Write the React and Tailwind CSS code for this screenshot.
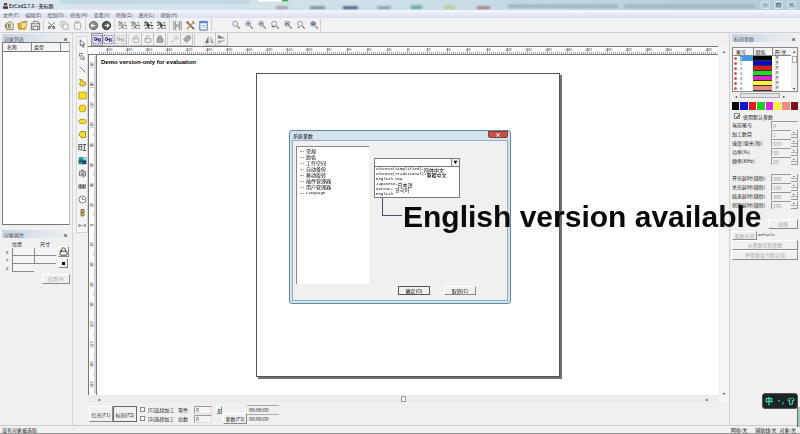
import { useState } from 'react'
import { Scissors, Copy, Clipboard, Lock, LockOpen, Wrench, Tag } from 'lucide-react'

const menus = ['文件(F)', '编辑(E)', '绘制(D)', '修改(M)', '查看(V)', '特殊(S)', '激光(L)', '帮助(H)']

const pens = [
  { id: 0, color: '#000000' },
  { id: 1, color: '#0a0ac8' },
  { id: 2, color: '#d8201c' },
  { id: 3, color: '#22dd22' },
  { id: 4, color: '#d428d4' },
  { id: 5, color: '#fff23a' },
  { id: 6, color: '#ee8c84' },
]

const swatches = ['#000000', '#1212d4', '#e41a1a', '#22cc22', '#dd22dd', '#ffee33', '#f08a80', '#7a1018']

const penParams = [
  { label: '当前笔号', value: '0', plain: true },
  { label: '加工数目', value: '1' },
  { label: '速度(毫米/秒)', value: '500' },
  { label: '功率(%)', value: '50' },
  { label: '频率(KHz)', value: '20' },
]

const delayParams = [
  { label: '开光延时(微秒)', value: '300' },
  { label: '关光延时(微秒)', value: '100' },
  { label: '结束延时(微秒)', value: '300' },
  { label: '拐角延时(微秒)', value: '100' },
]

const treeItems = ['常规', '颜色', '工作空间', '自动备份', '移动旋转', '插件管理器', '用户管理器']

const languages = [
  ['Chinese(Simplified)-', '简体中文'],
  ['Chinese(Traditional)-', '繁體中文'],
  ['English USA', ''],
  ['Japanese-', '日本語'],
  ['Korean- ', '한국어'],
  ['English', ''],
]

const raised = 'border border-t-white border-l-white border-r-[#8a8a8a] border-b-[#8a8a8a] bg-[#f0f0f0]'
const mono = 'font-[Liberation_Mono] text-[4px]'

function Svg({ children, className = 'size-[11px]' }) {
  return (
    <svg viewBox="0 0 12 12" fill="none" stroke="#555" className={`${className} shrink-0`}>
      {children}
    </svg>
  )
}

const NewIcon = () => (
  <Svg>
    <path d="M3 3.500 7 1.500 10 4v6.500H3z" fill="#fafae8" stroke="#77775a" />
    <path d="M2.500 4a3.500 3.500 0 0 0 0 5M5 4.500v4h3M5 6.500h3M5 4.500h3" stroke="#6b6b20" />
  </Svg>
)
const OpenIcon = () => (
  <Svg>
    <path d="M1 4h4l1 1h3v5H2z" fill="#f4a428" stroke="#c8801c" />
    <path d="M4 2.500 11 1l-1 7-5 2z" fill="#ffe08a" stroke="#c8a040" />
    <path d="m6 3 4-1" stroke="#5577bb" />
  </Svg>
)
const SaveIcon = () => (
  <Svg>
    <path d="M1.500 3.500h9v7h-9z" fill="#d8d8d8" stroke="#666" />
    <path d="M4 3.500v-2h4.500v2M3.500 7h5v3.500h-5z" fill="#fff" stroke="#777" />
  </Svg>
)
const RoundIcon = ({ dark, flip }) => (
  <Svg>
    <circle cx="6" cy="6" r="4.500" fill={dark ? '#555' : '#888'} stroke={dark ? '#333' : '#666'} />
    <path d={flip ? 'M4 6h4M6.500 4 8.500 6l-2 2' : 'M8 6H4M5.500 4 3.500 6l2 2'} stroke="#fff" strokeWidth="1.300" />
  </Svg>
)
const NodesIcon = ({ color = '#555', solid }) => (
  <Svg>
    <path d="M1 3h2M4 3h2M8 3h2M1 6h1M9 6h2M2 9h2M6 9h2M9 9h2M3 1v2M3 4v2M9 5v2M6 7v2" stroke={color} />
    <path d="m4 3 4 3-2 .5L5 8z" fill={solid ? color : '#ddd'} stroke={color} strokeWidth=".800" />
  </Svg>
)
const SelectNodesIcon = ({ color }) => (
  <Svg>
    <path d="M1 1.500h10v9H1z" stroke={color} strokeWidth=".700" strokeDasharray="1.500 1" />
    <path d="M3 4h2v3H3zM7 5h2v3H7zM5 6h2" stroke={color} />
  </Svg>
)
const HatchIcon = () => (
  <Svg>
    <path d="M2 1v10M4 1v10M8 1v10M10 1v10M4 4l4 4M4 8l4-4" stroke="#777" strokeWidth=".900" />
  </Svg>
)
const ToolIcon = () => (
  <Svg>
    <path d="m2 2 8 8" stroke="#555" strokeWidth="1.600" />
    <path d="m10 2-8 8" stroke="#d2962c" strokeWidth="1.600" />
    <path d="M8 1.500 10.500 4M1.500 3.500l2-2" stroke="#555" />
  </Svg>
)
const PropsIcon = () => (
  <Svg>
    <path d="M2 1.500h8v9.500H2z" fill="#f5faff" stroke="#3767a8" />
    <path d="M2 2.500h8" stroke="#4d8ce0" strokeWidth="2" />
    <path d="M4 6h4M4 8h4" stroke="#99b" strokeWidth=".800" />
  </Svg>
)
const ZoomIcon = ({ mark }) => (
  <Svg className="size-[10px]">
    <circle cx="5" cy="4.500" r="3" fill="#eef2fa" stroke="#7d88a4" />
    <path d="m7.500 7 3 3.500" stroke="#9c8468" strokeWidth="1.600" />
    {mark && <path d={mark} stroke="#445" strokeWidth="1.100" />}
  </Svg>
)
const MirrorIcon = ({ turn }) => (
  <Svg>
    <g transform={turn ? 'rotate(90 6 6)' : undefined} fill="#777" stroke="none">
      <path d="M5 2v8H1z" />
      <path d="M7 2v8h4z" fill="#aaa" />
    </g>
  </Svg>
)

const zoomMarks = [null, 'M3.500 4.500h3M5 3v3', 'M3.500 4.500h3M5 3v3', 'M2 8h4', 'M3 3l4 3M7 3 3 6', 'M2 9h2', 'M3.500 3.500h3v2h-3z']

// vertical drawing tools, top to bottom
const drawTools = [
  ['选取', <path d="M3 1v8l2-1.500L6.500 11 8 10 6.500 7H9z" fill="#fff" stroke="#445" />],
  ['节点编辑', <path d="M2 2h5M2 2v4M4 4v6l1.500-1L7 11l1-1-1-2h2z" fill="#fff" stroke="#667" />],
  ['直线', <path d="m2 2 8 8" stroke="#556" />],
  ['曲线', <path d="M2 2h3l2 3 3 1v3l-3 2-4-1-1-3 2-2z" fill="#f4d430" stroke="#8a7a20" />],
  ['矩形', <path d="M1 1.500h10v9H1z" fill="#f8e020" stroke="#a89020" />],
  ['圆', <circle cx="6" cy="6" r="4.700" fill="#f8e020" stroke="#a08c20" />],
  ['椭圆', <ellipse cx="6" cy="6" rx="5" ry="3.200" fill="#f8dc30" stroke="#a08c20" />],
  ['多边形', <path d="m1 6 3-4h6v8H4z" fill="#f8e020" stroke="#7c7020" />],
  ['文字', <path d="M1 2h4v7H1zM1 5h4M6 2h5M6 10h5M8.500 2v8" stroke="#333" />],
  ['位图', <g stroke="none"><path d="M1 1.500h10v9H1z" fill="#1d9a9a" /><path d="M1 6h10v5H1z" fill="#1c3f78" /><path d="M7 2h4v3H7z" fill="#a0e8c8" /><path d="M1 8h5v2.500H1z" fill="#26b04c" /></g>],
  ['矢量文件', <path d="M2 3h6v6H2zM4 2l3-1 3 3v5l-4 2M3 5l4 3M7 4 4 8" stroke="#555" />],
  ['条形码', <path d="M1.500 3v6M3.500 3v6M5.500 3v6M7.500 3v6M9.500 3v6" stroke="#444" strokeWidth="1.300" />],
  ['延时器', <g><circle cx="6" cy="6" r="4.700" fill="#fff" stroke="#555" /><path d="M6 6h3M6 3v3" stroke="#555" /></g>],
  ['输入口', <g><path d="M4 2h4v8.500H4z" fill="#d8b848" stroke="#554" /><path d="M5 5h2v2H5z" fill="#a83c20" stroke="none" /></g>],
  ['输出口', <path d="M1 5h2v2H1zM4.500 6h2M8 5h2v2H8z" stroke="#666" />],
]

function ToolButton({ label, children, className = 'w-[13px]' }) {
  return (
    <button type="button" aria-label={label} className={`flex h-[13px] items-center justify-center ${className}`}>
      {children}
    </button>
  )
}

const Divider = () => <span className="mx-px h-3 w-px bg-[#d0d0d0]" />

function TitleBar() {
  return (
    <header className="relative flex h-[10px] items-center justify-between overflow-hidden bg-linear-to-r from-[#dbe7ee] via-[#cddfe9] to-[#b0cbda]">
      <svg viewBox="0 0 800 10" preserveAspectRatio="none" className="absolute inset-0 h-full w-full">
        <path d="M258 0h26v1.500h-26z" fill="#fff" />
        <path d="M282 0h6v1.500h-6z" fill="#3cb43c" />
        <g style={{ filter: 'blur(1px)' }}>
          <path d="M60 0h190v4H60z" fill="#bfd6e2" />
          <path d="M276 6.500h12v2.500h-12z" fill="#a08f98" />
          <path d="M310 6.500h15v2.500h-15z" fill="#6a8098" />
          <path d="M343 6.500h15v2.500h-15z" fill="#304a68" />
          <path d="M377 6.500h14v2.500h-14z" fill="#8094ac" />
          <path d="M411 5.500h11v3.500h-11z" fill="#58b090" />
          <path d="M444 5.500h11v3.500h-11z" fill="#bccc8c" />
          <path d="M477 6.500h13v2.500h-13z" fill="#a06c74" />
          <path d="M508 4.500h110v3.500h-110zM624 4.500h130v3.500h-130z" fill="#9fb2c0" />
        </g>
      </svg>
      <h1 className="relative flex items-center gap-px pl-[3px] text-[5px] leading-[9px] text-black">
        <svg viewBox="0 0 6 8" className="h-[7px] w-[5px]">
          <path d="M1 1h4v3H1z" fill="#7a3040" />
          <path d="M0 5h6v3H0z" fill="#383848" />
        </svg>
        EzCad2.7.6 - 无标题
      </h1>
      <div className="relative flex gap-1 pr-1 text-[#5e707c]">
        {[['最小化', 'M3 5h6'], ['还原', 'M3 2h6v6H3zM3 4h6'], ['关闭', 'm3 2 6 5M9 2 3 7']].map(([label, d]) => (
          <button key={label} type="button" aria-label={label} className="flex h-2 w-[9px] items-center justify-center border border-white/40">
            <svg viewBox="0 0 12 10" fill="none" stroke="currentColor" strokeWidth="1.500" className="h-[6px] w-[7px]">
              <path d={d} />
            </svg>
          </button>
        ))}
      </div>
    </header>
  )
}

function MainToolbar() {
  return (
    <div className="flex h-[15px] items-center border-b border-[#cfcfcf] bg-[#f2f2f2] pl-[3px]">
      <ToolButton label="新建"><NewIcon /></ToolButton>
      <ToolButton label="打开"><OpenIcon /></ToolButton>
      <ToolButton label="保存"><SaveIcon /></ToolButton>
      <Divider />
      <ToolButton label="剪切"><Scissors className="size-[9px] -rotate-90 text-[#444]" /></ToolButton>
      <ToolButton label="复制"><Copy className="size-[9px] text-[#999]" /></ToolButton>
      <ToolButton label="粘贴"><Clipboard className="size-[9px] text-[#999]" /></ToolButton>
      <Divider />
      <ToolButton label="撤销"><RoundIcon /></ToolButton>
      <ToolButton label="重做"><RoundIcon dark flip /></ToolButton>
      <Divider />
      <ToolButton label="组合"><NodesIcon color="#777" /></ToolButton>
      <ToolButton label="分离组合"><NodesIcon color="#666" /></ToolButton>
      <ToolButton label="群组"><NodesIcon color="#333" solid /></ToolButton>
      <ToolButton label="分离群组"><NodesIcon color="#444" solid /></ToolButton>
      <Divider />
      <ToolButton label="填充"><HatchIcon /></ToolButton>
      <ToolButton label="系统参数"><ToolIcon /></ToolButton>
      <ToolButton label="对象属性"><PropsIcon /></ToolButton>
      <Divider />
      <div className="ml-4 flex border-r border-[#d0d0d0]">
        {zoomMarks.map((mark, i) => (
          <ToolButton key={i} label={`缩放 ${i + 1}`}><ZoomIcon mark={mark} /></ToolButton>
        ))}
      </div>
    </div>
  )
}

function SecondToolbar() {
  const cell = 'w-3 border-r border-b border-[#c4c4c4]'
  return (
    <div className="flex h-[13px] items-center pl-[3px]">
      <ToolButton label="选取全部" className="w-3 border border-[#999] bg-[#e8e8f4]"><SelectNodesIcon color="#2a2a80" /></ToolButton>
      <ToolButton label="反选" className={cell}><SelectNodesIcon color="#2a2a80" /></ToolButton>
      <ToolButton label="删除选择" className={cell}><SelectNodesIcon color="#aaa" /></ToolButton>
      <Divider />
      <ToolButton label="锁定" className={cell}><Lock className="size-2 text-[#999]" /></ToolButton>
      <ToolButton label="解锁" className={cell}><LockOpen className="size-2 text-[#888]" /></ToolButton>
      <ToolButton label="全部解锁" className={cell}><Lock className="size-2 fill-[#aaa] text-[#777]" /></ToolButton>
      <Divider />
      <ToolButton label="放置原点" className={cell}><Wrench className="size-2 text-[#b4b4b4]" /></ToolButton>
      <ToolButton label="标签" className={cell}><Tag className="size-2 -scale-x-100 fill-[#aaa] text-[#888]" /></ToolButton>
      <Divider />
      <span className="w-2" />
      <ToolButton label="水平镜像" className={cell}><MirrorIcon /></ToolButton>
      <ToolButton label="垂直镜像" className={cell}><MirrorIcon turn /></ToolButton>
    </div>
  )
}

function PanelTitle({ children }) {
  return (
    <div className="flex h-2 items-center justify-between bg-linear-to-r from-[#c6d5e2] to-[#eef1f4] px-[2px] text-[#556]">
      <h2>{children}</h2>
      <button type="button" aria-label="关闭" className="text-[5px] leading-none font-bold text-black">×</button>
    </div>
  )
}

function ObjectPanel() {
  return (
    <aside className="flex w-[73px] shrink-0 flex-col border-r border-[#d4d4d4] px-[2px] pt-px">
      <PanelTitle>对象列表</PanelTitle>
      <div className="h-[183px] border border-[#777] border-r-[#bbb] bg-white">
        <table className="w-full table-fixed border-collapse text-left">
          <thead>
            <tr className="h-2 border-b border-[#777] bg-[#f4f4f4]">
              <th className="border-r border-[#888] pl-1 font-normal">名称</th>
              <th className="border-r border-[#888] pl-[2px] font-normal">类型</th>
              <th aria-label="其他" className="w-[9px]" />
            </tr>
          </thead>
        </table>
      </div>
      <div className="mt-[5px]">
        <PanelTitle>对象属性</PanelTitle>
      </div>
      <div className="flex gap-[2px] pt-[2px] pl-1">
        <div className="flex flex-col">
          <div className="flex h-2 pl-[6px]">
            <span className="w-6">位置</span>
            <span className="pl-1">尺寸</span>
          </div>
          {['X', 'Y', 'Z'].map((axis) => (
            <div key={axis} className="flex h-2 items-center">
              <span className="w-[6px] text-[4px]">{axis}</span>
              <input aria-label={`${axis} 位置`} className="h-2 w-[22px] border-b border-l border-[#888] bg-[#f4f4f4]" />
              {axis !== 'Z' && <input aria-label={`${axis} 尺寸`} className="h-2 w-[22px] border-b border-l border-[#888] bg-[#f4f4f4]" />}
            </div>
          ))}
        </div>
        <div className="flex flex-col gap-px pt-[6px]">
          <button type="button" aria-label="锁定比例" className={`flex size-[11px] items-center justify-center ${raised}`}>
            <Lock className="size-[9px] text-[#222]" />
          </button>
          <button type="button" aria-label="基准点" className={`flex size-[10px] items-center justify-center ${raised}`}>
            <span className="size-[3px] bg-black" />
          </button>
        </div>
      </div>
      <button type="button" disabled className={`mt-[2px] h-[10px] w-7 self-end leading-[8px] text-[#aaa] ${raised}`}>应用(A)</button>
    </aside>
  )
}

function DrawTools() {
  return (
    <nav className="w-[15px] shrink-0 pt-[3px] pl-[3px]">
      <div className="flex flex-col items-center border border-[#d8d8d8] bg-[#f4f4f4]">
        {drawTools.map(([label, shape]) => (
          <ToolButton key={label} label={label} className="w-full">
            <Svg className="size-[9px]">{shape}</Svg>
          </ToolButton>
        ))}
      </div>
    </nav>
  )
}

function range(limit, step) {
  const list = []
  for (let v = -limit; v <= limit; v += step) list.push(v)
  return list
}

// both rulers have their zero at the middle of the canvas
function TopRuler() {
  return (
    <div className="flex h-[9px] border-t border-b border-[#777] bg-white pl-[9px]">
      <svg className="h-full w-full">
        <svg x="50%" overflow="visible">
          <path d={range(308, 2).map((v) => `M${v} ${v % 20 === 0 ? 1 : v % 10 === 0 ? 4 : 5}v7`).join('')} stroke="#777" strokeWidth=".600" />
          {range(300, 20).map((v) => (
            <text key={v} x={v + 1} y="4" fontSize="4" fill="#444" textAnchor="middle">{v}</text>
          ))}
        </svg>
      </svg>
    </div>
  )
}

function SideRuler() {
  return (
    <svg className="h-full w-[9px] shrink-0 border-r border-l border-[#777] bg-white">
      <svg y="50%" overflow="visible">
        <path d={range(168, 2).map((v) => `M${v % 20 === 0 ? 1 : v % 10 === 0 ? 4 : 5} ${v}h7`).join('')} stroke="#777" strokeWidth=".600" />
        {range(160, 20).map((v) => (
          <text key={v} transform={`translate(4 ${v}) rotate(-90)`} fontSize="4" fill="#444" textAnchor="middle">{-v}</text>
        ))}
      </svg>
    </svg>
  )
}

function Workspace() {
  return (
    <main className="flex min-w-0 flex-1 flex-col">
      <SecondToolbar />
      <div className="flex">
        <div className="flex min-w-0 flex-1 flex-col">
          <TopRuler />
          <div className="flex h-[340px]">
            <SideRuler />
            <div className="relative flex flex-1 items-center justify-center bg-white">
              <p className="absolute top-[3px] left-1 font-[Liberation_Sans] text-[6px] leading-[8px] font-bold text-black">
                Demo version-only for evaluation
              </p>
              <div className="aspect-square w-[304px] border border-[#555] bg-white shadow-[2px_2px_0_#707070]" />
            </div>
          </div>
          <div className="flex h-2 items-center justify-between bg-[#ececec] px-[10px] text-[4px]">
            <span>◂</span>
            <span className="h-[6px] w-[5px] border border-[#999] bg-[#f8f8f8]" />
            <span>▸</span>
          </div>
        </div>
        <div className="flex w-[11px] flex-col items-center justify-between bg-[#f4f4f4] py-[3px] pb-2 text-[4px] leading-none">
          <span>▴</span>
          <span>▾</span>
        </div>
      </div>
      <MarkBar />
    </main>
  )
}

function MarkBar() {
  const [flags, setFlags] = useState({ loop: false, select: false })

  const toggle = (name) => setFlags({ ...flags, [name]: !flags[name] })

  return (
    <div className="flex flex-1 items-center pl-px">
      <button type="button" className={`h-4 w-6 ${raised}`}>红光(F1)</button>
      <button type="button" className="h-4 w-6 border border-[#666] bg-[#f0f0f0]">标刻(F2)</button>
      <div className="flex flex-col pl-[3px]">
        {[['loop', '[C]连续加工', '零件'], ['select', '[S]选择加工', '总数']].map(([name, label, count]) => (
          <div key={name} className="flex h-[9px] items-center">
            <label className="flex w-[38px] items-center gap-[3px] whitespace-nowrap">
              <input
                type="checkbox"
                checked={flags[name]}
                onChange={() => toggle(name)}
                className="size-[5px] shrink-0 appearance-none border border-[#888] bg-white checked:bg-black"
              />
              {label}
            </label>
            <label className="flex items-center gap-[6px]">
              {count}
              <input defaultValue="0" className="h-2 w-[18px] border border-[#999] border-r-[#ddd] border-b-[#ddd] bg-[#f4f4f4] px-px" />
            </label>
          </div>
        ))}
      </div>
      <button type="button" className={`mb-2 ml-1 h-2 w-[6px] leading-none ${raised}`}>R</button>
      <button type="button" className={`mt-[9px] ml-px h-[11px] w-6 leading-[9px] ${raised}`}>参数(F3)</button>
      <div className="flex w-8 flex-col">
        <output className="h-[9px] border-t border-[#aaa] pl-[2px] leading-[8px]">00:00:00</output>
        <output className="h-[9px] border-t border-[#aaa] pl-[2px] leading-[8px]">00:00:00</output>
      </div>
    </div>
  )
}

function ParamRow({ label, value, plain }) {
  return (
    <label className="flex h-[9px] items-center justify-between whitespace-nowrap">
      {label}
      <span className="flex w-[27px]">
        <input defaultValue={value} className="h-2 min-w-0 flex-1 border-t border-l border-[#999] px-px text-[#999]" />
        {!plain && (
          <span className="flex w-[7px] flex-col border-r border-b border-[#999] bg-[#f0f0f0] text-center text-[3px] leading-[4px]">
            <span className="border-b border-[#aaa]">▴</span>
          </span>
        )}
      </span>
    </label>
  )
}

function PenPanel() {
  const [useDefault, setUseDefault] = useState(true)

  return (
    <aside className="flex w-[71px] shrink-0 flex-col border-l border-[#d0d0d0] px-[2px] pt-px">
      <PanelTitle>标刻参数</PanelTitle>
      <div className="mt-[5px] flex border border-[#888] bg-white">
        <table className="flex-1 table-fixed border-collapse text-left leading-[5px]">
          <thead>
            <tr className="h-[7px] border-b border-[#888] bg-[#f4f4f4]">
              <th className="w-5 border-r border-[#888] pl-[3px] font-normal">笔号</th>
              <th className="w-[19px] border-r border-[#888] pl-[2px] font-normal">颜色</th>
              <th className="pl-[2px] font-normal">开/关</th>
            </tr>
          </thead>
          <tbody>
            {pens.map((pen) => (
              <tr key={pen.id} className="h-[5px] text-[4px] leading-[5px]">
                <td className="p-0">
                  <span className="flex items-center gap-[3px] pl-px">
                    <span className="size-[3px] rounded-full bg-[#e05050]" />
                    <span className={pen.id === 0 ? 'flex-1 bg-[#3c98ea] text-white' : 'flex-1 text-[#335]'}>{pen.id}</span>
                  </span>
                </td>
                <td className="border-b border-[#333] p-0" style={{ background: pen.color }} />
                <td className="p-0 pl-[3px]">开</td>
              </tr>
            ))}
          </tbody>
        </table>
        <div className="flex w-[6px] flex-col items-center bg-[#f0f0f0] py-px text-[4px] leading-none">
          <span>▴</span>
          <span className="mt-[3px] mb-auto h-[7px] w-[5px] border border-[#aaa] bg-white" />
          <span>▾</span>
        </div>
      </div>
      <div className="flex h-[7px] items-center gap-[3px] bg-[#f0f0f0] px-[3px] text-[4px] leading-none">
        <span>◂</span>
        <span className="h-[5px] w-10 border border-[#aaa] bg-[#e4e4e4]" />
        <span>▸</span>
      </div>
      <div className="mt-[3px] flex h-2 gap-px">
        {swatches.map((c) => (
          <button key={c} type="button" aria-label={`颜色 ${c}`} className="flex-1" style={{ background: c }} />
        ))}
      </div>
      <label className="mt-[2px] flex h-2 items-center gap-[3px] pl-[2px]">
        <span className="grid size-[6px] place-items-center">
          <input
            type="checkbox"
            checked={useDefault}
            onChange={() => setUseDefault(!useDefault)}
            className="peer col-start-1 row-start-1 size-[6px] appearance-none border border-[#888] bg-white"
          />
          <svg viewBox="0 0 6 6" fill="none" stroke="#111" strokeWidth="1.200" className="invisible col-start-1 row-start-1 size-[5px] peer-checked:visible">
            <path d="m1 3 1.500 1.500L5 1" />
          </svg>
        </span>
        使用默认参数
      </label>
      <div className="flex flex-col">
        {penParams.map((p) => <ParamRow key={p.label} {...p} />)}
      </div>
      <div className="mt-2 flex flex-col">
        {delayParams.map((p) => <ParamRow key={p.label} {...p} />)}
      </div>
      <button type="button" disabled className={`mt-[10px] h-[10px] w-[30px] self-end leading-[8px] text-[#aaa] ${raised}`}>高级</button>
      <div className="mt-[2px] flex h-[9px] items-center">
        <button type="button" disabled className={`h-[9px] w-[25px] leading-[7px] text-[#aaa] ${raised}`}>参数名称</button>
        <input aria-label="参数名称" defaultValue="Default" className={`w-9 px-px ${mono}`} />
      </div>
      <button type="button" disabled className={`h-[10px] leading-[8px] text-[#aaa] ${raised}`}>从参数库取参数</button>
      <button type="button" disabled className={`h-[10px] leading-[8px] text-[#aaa] ${raised}`}>将参数设为默认值</button>
    </aside>
  )
}

function TreeItem({ children }) {
  return (
    <li className="flex h-[6px] items-center gap-[2px] leading-[6px]">
      <span className="w-1 border-t border-dotted border-[#999]" />
      {children}
    </li>
  )
}

function SettingsDialog() {
  const [language, setLanguage] = useState('')

  return (
    <div className="pointer-events-none fixed inset-0 flex items-center justify-center">
      <section role="dialog" aria-label="系统参数" className="pointer-events-auto relative flex h-[174px] w-[222px] flex-col rounded-[3px] border border-[#5e8ca2] bg-[#d3e3ed] p-[2px] pt-0 text-black">
        <div className="flex h-[9px] items-start justify-between pl-px">
          <h2 className="leading-[9px]">系统参数</h2>
          <button type="button" aria-label="关闭" className="flex h-[7px] w-5 items-center justify-center rounded-b-[2px] border border-[#8c3a34] bg-[#cb5148] text-[6px] leading-none font-bold text-white">×</button>
        </div>
        <div className="flex flex-1 flex-col border border-[#8fb0c2] bg-[#f0f0f0] pt-[5px] pl-[3px]">
          <div className="flex gap-[5px]">
            <ul className="h-[138px] w-[73px] border-t border-l border-[#888] bg-white pt-px pl-[3px]">
              {treeItems.map((item) => <TreeItem key={item}>{item}</TreeItem>)}
              <TreeItem><span className={mono}>Language</span></TreeItem>
            </ul>
            <div className="w-[86px] pt-[12px]">
              <div className="flex h-[9px] border border-[#777] bg-white">
                <select aria-label="Language" value={language} onChange={(e) => setLanguage(e.target.value)} className="min-w-0 flex-1 appearance-none bg-white">
                  <option value="" />
                  {languages.map(([latin, local]) => <option key={latin}>{latin + local}</option>)}
                </select>
                <span className="w-2 border-l border-[#888] bg-[#f0f0f0] text-center text-[4px] leading-[7px]">▼</span>
              </div>
              <ul className="border border-t-0 border-[#777] bg-white">
                {languages.map(([latin, local]) => (
                  <li key={latin} className="flex h-[5px] items-center pl-px leading-[5px] whitespace-pre">
                    <span className={mono}>{latin}</span>
                    {local && <span>{local}</span>}
                  </li>
                ))}
              </ul>
            </div>
          </div>
          <div className="mt-[2px] flex justify-end gap-[14px] pr-[31px]">
            <button type="button" className="h-[9px] w-8 border border-[#555] bg-[#f0f0f0] leading-[7px]">确定(O)</button>
            <button type="button" className={`h-[9px] w-8 leading-[7px] ${raised}`}>取消(C)</button>
          </div>
        </div>
        {/* callout for the last language entry */}
        <div className="absolute top-[67px] left-[92px] flex items-start">
          <span className="h-[18px] w-5 border-b border-l border-[#4a4a6c]" />
          <strong className="pl-px font-[Liberation_Sans] text-[30px] leading-[38px] font-bold whitespace-nowrap text-[#0a0a0a]">
            English version available
          </strong>
        </div>
      </section>
    </div>
  )
}

function StatusBar() {
  return (
    <footer className="flex h-[9px] items-center justify-between border-t border-b border-t-[#ccc] border-b-[#999] bg-[#f0f0f0] px-[2px]">
      <span>没有对象被选取</span>
      <span className="flex gap-2 pr-[2px]">
        <span>网格:关</span>
        <span className="flex gap-[3px]"><span>辅助线:关</span><span>对象:关</span></span>
      </span>
    </footer>
  )
}

function ImeBadge() {
  return (
    <>
      <div className="fixed right-0 bottom-[7px] h-5 w-[3px] border-l border-[#667] bg-[#a9c9bd]" />
      <div className="fixed right-[2px] bottom-[25px] flex h-4 w-9 items-center justify-center gap-[3px] rounded-[3px] border border-[#555] bg-[#1c2426] text-[8px] leading-none font-bold text-[#4fe0c0]">
        <span>中</span>
        <span className="text-[6px]">•,</span>
        <svg viewBox="0 0 12 12" fill="none" stroke="currentColor" strokeWidth="1.500" className="size-2">
          <path d="M4 1.500 1 4l1.500 2L4 5v6h4V5l1.500 1L11 4 8 1.500C7 3 5 3 4 1.500z" />
        </svg>
      </div>
    </>
  )
}

export default function App() {
  return (
    <div className="flex min-h-screen flex-col bg-[#f0f0f0] font-['Noto_Sans_CJK_SC','Noto_Sans_CJK_KR',sans-serif] text-[5px] leading-[7px] text-[#222]">
      <TitleBar />
      <nav className="flex h-2 items-center gap-[6px] bg-linear-to-b from-[#f6f7fc] to-[#d9deef] pl-[3px] text-[#555]">
        {menus.map((m) => (
          <a key={m} href="#" className="whitespace-nowrap">{m}</a>
        ))}
      </nav>
      <MainToolbar />
      <div className="flex flex-1">
        <ObjectPanel />
        <DrawTools />
        <Workspace />
        <PenPanel />
      </div>
      <StatusBar />
      <SettingsDialog />
      <ImeBadge />
    </div>
  )
}
